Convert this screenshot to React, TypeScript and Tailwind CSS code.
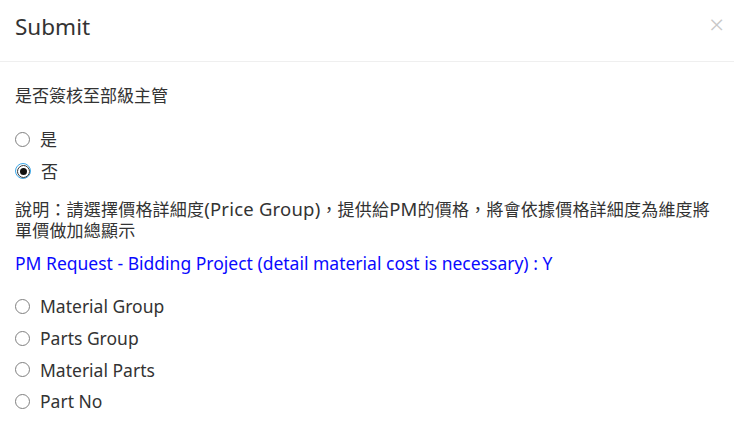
import React from "react";

const font = { fontFamily: '"Noto Sans", "Noto Sans CJK TC", sans-serif' };

function Radio({ checked, label, size }: { checked?: boolean; label: string; size: string }) {
  return (
    <div className="flex items-center h-[31.6px]">
      {checked ? (
        <span className="w-[16px] h-[16px] rounded-full border-[1.5px] border-[#3ba7e8] flex items-center justify-center">
          <span className="w-[13px] h-[13px] rounded-full border border-[#333] flex items-center justify-center bg-white">
            <span className="w-[7px] h-[7px] rounded-full bg-[#111]" />
          </span>
        </span>
      ) : (
        <span className="w-[15px] h-[15px] rounded-full border border-[#808080] bg-white" />
      )}
      <span className={`ml-[10px] text-[#333] ${size}`}>{label}</span>
    </div>
  );
}

export default function App() {
  return (
    <div className="w-[734px] h-[422px] bg-white overflow-hidden" style={font}>
      <div className="h-[62px] border-b border-[#efefef] flex items-center justify-between pl-[15px] pr-[10px]">
        <div className="text-[22.5px] text-[#333] leading-none -mt-[6px]">Submit</div>
        <div className="text-[26px] text-[#c8c8c8] leading-none -mt-[14px] font-light">×</div>
      </div>
      <div className="px-[15px] pt-[22px]">
        <div className="text-[17px] text-[#333] leading-[24px]">是否簽核至部級主管</div>
        <div className="mt-[16px]">
          <Radio label="是" size="text-[17px]" />
          <Radio checked label="否" size="text-[17px]" />
        </div>
        <div className="mt-[11px] text-[17px] text-[#333] leading-[21px] whitespace-nowrap tracking-[0.2px]">
          說明：請選擇價格詳細度<span className="text-[18.5px]">(Price Group)</span>，提供給<span className="text-[18.5px]">PM</span>的價格，將會依據價格詳細度為維度將
          <br />
          單價做加總顯示
        </div>
        <div className="mt-[9.5px] text-[17.5px] text-[#0a0aff] leading-[24px]">
          PM Request - Bidding Project (detail material cost is necessary) : Y
        </div>
        <div className="mt-[16px]">
          <Radio label="Material Group" size="text-[17.5px]" />
          <Radio label="Parts Group" size="text-[17.5px]" />
          <Radio label="Material Parts" size="text-[17.5px]" />
          <Radio label="Part No" size="text-[17.5px]" />
        </div>
      </div>
    </div>
  );
}
